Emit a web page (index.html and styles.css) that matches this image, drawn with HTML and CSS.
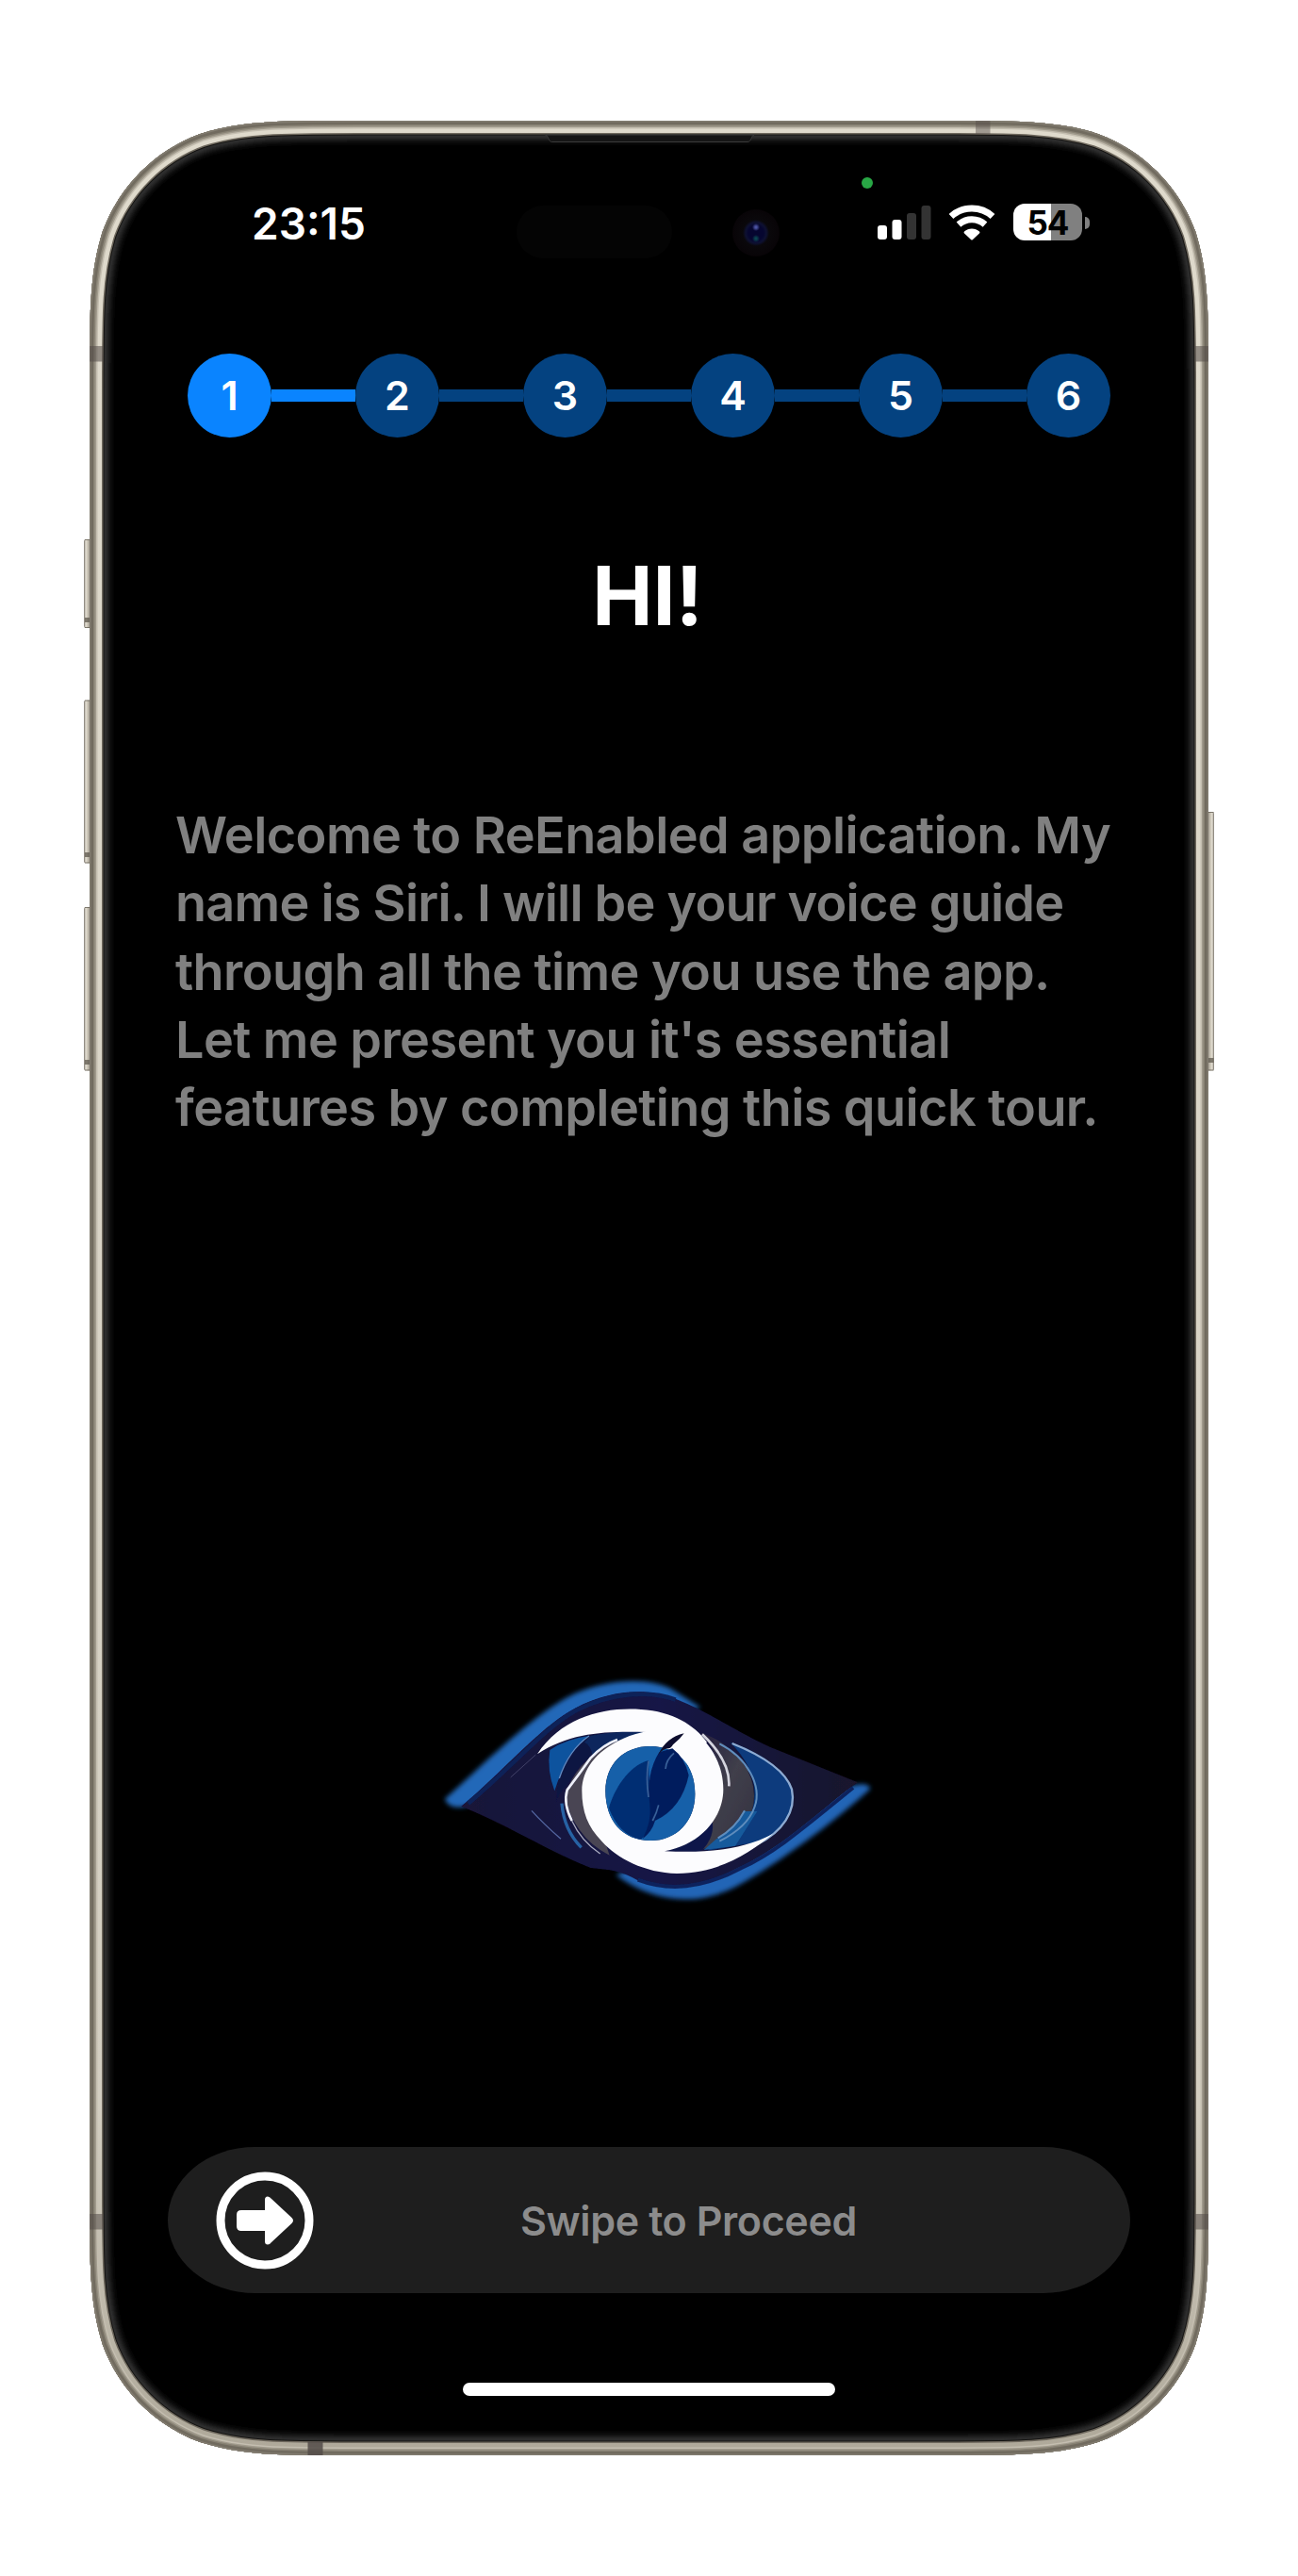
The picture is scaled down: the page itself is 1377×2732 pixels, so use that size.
FILE: index.html
```html
<!DOCTYPE html>
<html lang="en">
<head>
<meta charset="utf-8">
<title>ReEnabled</title>
<link rel="stylesheet" href="styles.css">
</head>
<body>
<div class="phone">
  <svg class="frame" viewBox="-8 0 1203 2476" width="1203" height="2476" aria-hidden="true">
    <defs>
      <path id="body" d="M284 0H903C984.5 0 1025.5 0 1069.5 13.9C1117.7 31.5 1155.5 69.3 1173.1 117.5C1187 161.5 1187 202.5 1187 284V2192C1187 2273.5 1187 2314.5 1173.1 2358.5C1155.5 2406.7 1117.7 2444.5 1069.5 2462.1C1025.5 2476 984.5 2476 903 2476H284C202.5 2476 161.5 2476 117.5 2462.1C69.3 2444.5 31.5 2406.7 13.9 2358.5C0 2314.5 0 2273.5 0 2192V284C0 202.5 0 161.5 13.9 117.5C31.5 69.3 69.3 31.5 117.5 13.9C161.5 0 202.5 0 284 0Z"/>
      <clipPath id="clip"><use href="#body"/></clipPath>
      <linearGradient id="light" x1="0" y1="0" x2="0" y2="2476" gradientUnits="userSpaceOnUse">
        <stop offset="0" stop-color="#dfdacc"/><stop offset=".85" stop-color="#d3cec1"/><stop offset="1" stop-color="#aea899"/>
      </linearGradient>
      <linearGradient id="button" x1="0" x2="1" y1="0" y2="0">
        <stop offset="0" stop-color="#77726a"/><stop offset=".25" stop-color="#e4dfd3"/><stop offset=".55" stop-color="#c4beb0"/><stop offset="1" stop-color="#77726a"/>
      </linearGradient>
      <linearGradient id="buttonRight" x1="1" x2="0" y1="0" y2="0">
        <stop offset="0" stop-color="#77726a"/><stop offset=".25" stop-color="#e4dfd3"/><stop offset=".55" stop-color="#c4beb0"/><stop offset="1" stop-color="#77726a"/>
      </linearGradient>
      <filter id="soft" x="-5%" y="-5%" width="110%" height="110%"><feGaussianBlur stdDeviation="3.500"/></filter>
    </defs>
    <rect x="-6" y="444" width="8" height="94" rx="2" fill="url(#button)"/>
    <rect x="-6" y="614.500" width="8" height="173" rx="2" fill="url(#button)"/>
    <rect x="-6" y="834" width="8" height="173.500" rx="2" fill="url(#button)"/>
    <rect x="1185" y="733" width="8" height="274.500" rx="2" fill="url(#buttonRight)"/>
    <g fill="#5e584e" fill-opacity=".75">
      <rect x="-5" y="527" width="6" height="5"/><rect x="-5" y="776" width="6" height="5"/>
      <rect x="-5" y="996" width="6" height="5"/><rect x="1186.500" y="994" width="6" height="5"/>
      <rect x="-5" y="537" width="6" height="1"/><rect x="-5" y="786.500" width="6" height="1"/>
      <rect x="-5" y="1006.500" width="6" height="1"/><rect x="1186.500" y="1006.500" width="6" height="1"/>
      <rect x="-5" y="444" width="6" height="1"/><rect x="-5" y="614.500" width="6" height="1"/>
      <rect x="-5" y="834" width="6" height="1"/><rect x="1186.500" y="733" width="6" height="1"/>
    </g>
    <g clip-path="url(#clip)" fill="none">
      <use href="#body" fill="#000"/>
      <use href="#body" stroke="#383838" stroke-width="40" filter="url(#soft)"/>
      <use href="#body" stroke="#2e2e2e" stroke-width="33"/>
      <use href="#body" stroke="#151412" stroke-width="31"/>
      <use href="#body" stroke="#6f695e" stroke-width="29"/>
      <use href="#body" stroke="url(#light)" stroke-width="26"/>
      <use href="#body" stroke="#c4beb0" stroke-width="17"/>
      <use href="#body" stroke="#a19b8d" stroke-width="14"/>
      <use href="#body" stroke="#888274" stroke-width="11"/>
      <use href="#body" stroke="#716b5f" stroke-width="8"/>
      <use href="#body" stroke="#827c70" stroke-width="3"/>
      <g fill="#544c49" fill-opacity=".55">
        <rect x="0" y="239" width="14.500" height="16.500"/><rect x="1172.500" y="239" width="14.500" height="16.500"/>
        <rect x="0" y="2220" width="14.500" height="16.500"/><rect x="1172.500" y="2220" width="14.500" height="16.500"/>
        <rect x="940" y="0" width="15.500" height="14" fill-opacity=".45"/><rect x="231.500" y="2461.500" width="16" height="14.500" fill-opacity=".85"/>
      </g>
      <path d="M483.500 15H705C702 15 702.500 22.500 698 22.500H490.500C486.500 22.500 487 15 483.500 15Z" fill="#151515" stroke="#3a3a3a" stroke-width="1"/>
    </g>
  </svg>

  <main class="screen">
    <header class="status">
      <span class="clock">23:15</span>
      <span class="speaker"></span>
      <span class="camera"></span>
      <svg class="signal" viewBox="0 0 58 40" width="58" height="40" aria-hidden="true">
        <g fill="#fff"><rect x="5" y="23" width="10" height="15" rx="3"/><rect x="20.500" y="17" width="10" height="21" rx="3"/></g>
        <g fill="#333"><rect x="36" y="10" width="10" height="28" rx="3"/><rect x="51.500" y="2" width="10" height="36" rx="3"/></g>
      </svg>
      <svg class="wifi" viewBox="0 0 50 38" width="50" height="38" aria-hidden="true">
        <g fill="none" stroke="#fff">
          <path d="M3 12.500C15.300 1.200 34.700 1.200 47 12.500" stroke-width="7"/>
          <path d="M11 21.200C19 14 31 14 39 21.200" stroke-width="7"/>
        </g>
        <path d="M17 28.600C21.500 24.600 28.500 24.600 33 28.600Q34 29.500 33 30.500L26 37Q25 38 24 37L17 30.500Q16 29.500 17 28.600Z" fill="#fff"/>
      </svg>
      <span class="battery">54</span>
      <span class="battery-cap"></span>
      <span class="privacy-dot"></span>
    </header>

    <ol class="steps">
      <li class="step active">1</li>
      <li class="bar active"></li>
      <li class="step">2</li>
      <li class="bar"></li>
      <li class="step">3</li>
      <li class="bar"></li>
      <li class="step">4</li>
      <li class="bar"></li>
      <li class="step">5</li>
      <li class="bar"></li>
      <li class="step">6</li>
    </ol>

    <h1 class="title">HI!</h1>
    <p class="intro">Welcome to ReEnabled application. My<br><span class="tight">name is Siri. I will be your voice guide</span><br>through all the time you use the app.<br>Let me present you it's essential<br>features by completing this quick tour.</p>

    <svg class="eye" viewBox="0 0 1440 840" width="480" height="280" role="img" aria-label="ReEnabled logo">
      <defs>
        <filter id="glow" x="-10%" y="-10%" width="120%" height="120%"><feGaussianBlur stdDeviation="8"/></filter>
        <filter id="fine" x="-10%" y="-10%" width="120%" height="120%"><feGaussianBlur stdDeviation="2"/></filter>
        <linearGradient id="lid" x1="0" x2="1"><stop offset="0" stop-color="#1a1238"/><stop offset=".5" stop-color="#121746"/><stop offset="1" stop-color="#1a122c"/></linearGradient>
        <linearGradient id="gray" x1="0" x2="1" y1="0" y2="1"><stop offset="0" stop-color="#201a3c"/><stop offset=".5" stop-color="#403f4b"/><stop offset="1" stop-color="#33313f"/></linearGradient>
      </defs>
      <path d="M36 440C170 320 330 160 450 105C560 58 690 53 760 93L850 150L600 240L110 462C75 474 42 464 36 440Z" fill="#2268b8" filter="url(#glow)"/>
      <path d="M1390 408C1300 492 1130 624 990 704C850 789 700 774 580 682L800 600L1340 396Q1385 388 1390 408Z" fill="#2065b6" filter="url(#glow)"/>
      <path d="M88 464C230 345 340 210 450 152C570 90 680 88 770 122C870 160 960 225 1070 275L1350 388C1260 450 1120 590 980 655C840 730 740 735 650 700C600 670 560 665 500 660C370 610 230 520 88 464Z" fill="url(#lid)" filter="url(#fine)"/>
      <path d="M110 455C260 330 350 215 455 158C570 100 690 95 770 125" fill="none" stroke="#0d2058" stroke-width="14" filter="url(#fine)"/>
      <path d="M1335 405C1180 530 1090 610 980 660C850 730 740 732 650 698" fill="none" stroke="#0b235d" stroke-width="12" filter="url(#fine)"/>

      <g filter="url(#fine)">
        <path d="M370 285Q420 250 495 240Q420 300 385 415Q360 350 370 285Z" fill="#0f529e"/>
        <path d="M490 242Q590 220 680 228Q610 240 550 270Q475 310 430 390Q400 420 390 450Q390 320 490 242Z" fill="#111443"/>
        <path d="M500 240Q590 222 680 228L590 260Q540 275 505 300Q500 270 480 260Z" fill="#07285d"/>
        <path d="M495 240Q430 285 400 375" fill="none" stroke="#5f8cc4" stroke-width="4"/>
        <path d="M330 298C410 180 540 148 660 156C760 162 830 205 870 260L800 330L680 228C560 225 440 225 330 298Z" fill="#fcfcfe"/>

        <path d="M600 250Q470 300 425 410Q415 470 465 540Q500 590 560 620L520 500L510 380Z" fill="#484553"/>
        <path d="M585 252Q540 268 500 310Q465 360 425 412Q412 455 440 510" fill="none" stroke="#eef0fa" stroke-width="8"/>
        <path d="M440 510Q470 575 530 615" fill="none" stroke="#a9abc0" stroke-width="4"/>
        <path d="M408 455Q415 540 470 595" fill="none" stroke="#2862a4" stroke-width="10"/>
        <path d="M312 478Q350 520 405 568" fill="none" stroke="#5366a0" stroke-width="4"/>
        <path d="M245 372L325 300" fill="none" stroke="#414168" stroke-width="3"/>

        <path d="M945 262C1040 290 1120 350 1142 420C1155 480 1110 540 1050 575L870 605Q970 550 1010 490C1040 400 1010 330 945 262Z" fill="#083b7d"/>
        <path d="M850 230Q920 250 980 320Q1040 400 1010 490Q960 560 860 600L830 560Q900 520 920 420Q920 310 850 230Z" fill="url(#gray)"/>
        <path d="M885 500Q900 560 850 608L735 607Q830 570 885 500Z" fill="#101848"/>
        <path d="M990 480Q970 525 900 568L860 603L960 590L1030 480Z" fill="#185a9c"/>
        <path d="M910 265C1000 310 1045 400 1022 465Q1000 530 910 575M990 478Q960 535 905 565" fill="none" stroke="#5f8dbd" stroke-width="6"/>
        <path d="M950 264C1040 300 1120 350 1140 410C1155 480 1110 545 1030 585" fill="none" stroke="#8eabd2" stroke-width="7"/>
        <path d="M855 235Q945 320 940 400" fill="none" stroke="#d5d5df" stroke-width="8"/>

        <path fill-rule="evenodd" d="M590 255C650 222 760 205 830 230C880 260 922 330 922 410C922 500 850 585 735 607C860 612 970 608 1080 552C1010 610 910 677 775 678C670 675 585 630 535 575C490 530 472 480 472 415C472 345 520 290 590 255ZM690 273C605 273 547 330 547 415C547 510 600 573 690 573C775 573 832 510 832 425C832 330 775 273 690 273Z" fill="#fcfcfe"/>
        <path d="M690 273C605 273 547 330 547 415C547 510 600 573 690 573C775 573 832 510 832 425C832 330 775 273 690 273Z" fill="#1360a9"/>
        <path d="M684 318C620 335 575 410 558 470Q590 555 660 570Q690 540 703 490Q685 420 684 318Z" fill="#042e73"/>
        <path d="M718 292Q675 360 688 460Q695 510 665 568Q695 545 705 510Q790 470 812 365Q800 310 760 280Z" fill="#061e5d"/>
        <path d="M684 320Q675 370 684 435M765 295Q740 315 738 345M716 460Q710 485 697 510" fill="none" stroke="#386199" stroke-width="5"/>
        <path d="M715 300Q740 245 797 232Q785 250 762 268Q755 280 748 280Q730 280 715 300Z" fill="#10112f"/>
      </g>
    </svg>

    <div class="swipe">
      <svg class="swipe-icon" viewBox="0 0 104 104" width="104" height="104" aria-hidden="true">
        <circle cx="52" cy="52" r="47" fill="none" stroke="#fff" stroke-width="9"/>
        <path d="M27 41H52V30Q52 26.500 55 26.500Q57 26.500 59 29L80.500 49Q83.500 52 80.500 55L59 75Q57 77.500 55 77.500Q52 77.500 52 74V63H27Q22 63 22 58V46Q22 41 27 41Z" fill="#fff"/>
      </svg>
      <span class="swipe-label">Swipe to Proceed</span>
    </div>
    <div class="home-bar"></div>
  </main>
</div>
</body>
</html>
```
FILE: styles.css
```css
* { box-sizing: border-box; }
body {
  margin: 0;
  padding: 128px 95px;
  background: #fff;
  font-family: Inter, "Liberation Sans", sans-serif;
  color: #fff;
}
.phone { position: relative; width: 1187px; height: 2476px; }
.frame { position: absolute; left: -8px; top: 0; }

.screen {
  position: relative;
  height: 100%;
  display: flex;
  flex-direction: column;
  align-items: center;
}

.status {
  width: 100%;
  height: 90px;
  margin-top: 64px;
  padding: 23px 0 0 172px;
  display: flex;
  position: relative;
}
.clock {
  width: 281px;
  font-size: 46px;
  font-weight: 600;
  line-height: 44px;
  letter-spacing: 0;
}
.speaker {
  width: 165px;
  height: 56px;
  margin-top: 3px;
  border-radius: 28px;
  background: #040404;
}
.camera {
  width: 50px;
  height: 50px;
  margin: 7px 0 0 64px;
  border-radius: 50%;
  background:
    radial-gradient(circle at 50% 38%, #4a52a0 0 1px, transparent 4px),
    radial-gradient(circle at 50% 62%, #0b4450 0 1px, transparent 4px),
    radial-gradient(circle, #060630 0 8px, #0e1132 11px, #0a080b 14px, #080407 25px);
}
.signal { margin: 1px 0 0 99px; overflow: visible; }
.wifi { margin: 2px 0 0 22px; }
.battery {
  width: 73px;
  height: 39px;
  margin: 1px 0 0 19px;
  border-radius: 12px;
  background: linear-gradient(90deg, #fff 39.5px, #808080 39.5px);
  color: #000;
  font-size: 35px;
  font-weight: 700;
  line-height: 40px;
  text-align: center;
  letter-spacing: -1px;
}
.battery-cap {
  width: 5px;
  height: 13px;
  margin: 15px 0 0 3px;
  border-radius: 0 5px 5px 0;
  background: #808080;
}
.privacy-dot {
  position: absolute;
  left: 819px;
  top: -4px;
  width: 12px;
  height: 12px;
  border-radius: 50%;
  background: #28a745;
}

.steps {
  display: flex;
  align-items: center;
  width: 979px;
  margin: 93px 0 0;
  padding: 0;
  list-style: none;
}
.step {
  width: 89px;
  height: 89px;
  border-radius: 50%;
  background: #044280;
  font-size: 43px;
  font-weight: 600;
  line-height: 89px;
  text-align: center;
}
.bar { flex: 1; height: 13px; background: #044280; }
.step.active, .bar.active { background: #0a84ff; }

.title {
  margin: 116px 3px 0 0;
  font-size: 86px;
  font-weight: 700;
  line-height: 104px;
  letter-spacing: 0;
}
.intro {
  align-self: stretch;
  margin: 166px 0 0;
  padding-left: 91px;
  color: #808080;
  font-size: 54px;
  font-weight: 600;
  line-height: 72.25px;
  letter-spacing: -0.57px;
  white-space: nowrap;
}
.tight { letter-spacing: -0.76px; }
.eye { margin-top: 550px; margin-left: 23px; }

.swipe {
  display: flex;
  align-items: center;
  width: 1021px;
  height: 155px;
  margin-top: 236px;
  padding-left: 51px;
  border-radius: 92px / 77.5px;
  background: #1e1e1e;
}
.swipe-label {
  margin-left: 219px;
  color: #8c8c8c;
  font-size: 43px;
  font-weight: 600;
  line-height: 60px;
  letter-spacing: -0.38px;
  white-space: nowrap;
}
.home-bar {
  width: 395px;
  height: 14px;
  margin-top: 95px;
  border-radius: 7px;
  background: #fff;
}
```
